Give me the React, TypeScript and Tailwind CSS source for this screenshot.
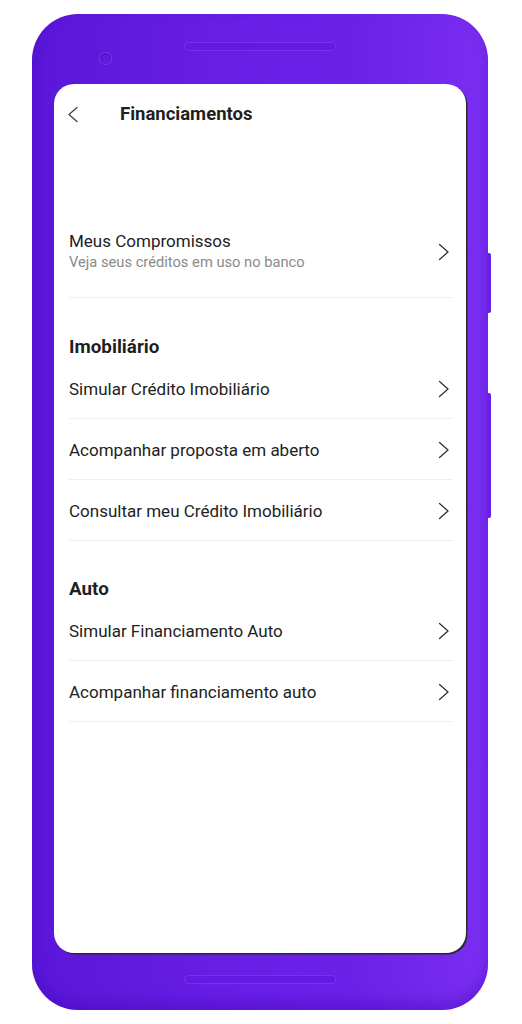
import React from "react";

const Chevron = () => (
  <svg width="12" height="18" viewBox="0 0 12 18" fill="none" className="shrink-0">
    <polyline points="1.5,1.5 10,9 1.5,16.5" stroke="#333" strokeWidth="1.3" strokeLinecap="round" strokeLinejoin="round" />
  </svg>
);

const Row = ({ label }: { label: string }) => (
  <div className="h-[61px] flex items-center justify-between border-b border-[#efefef] pr-[3px] pt-[2px]">
    <span className="text-[17px] text-[#222] leading-[20px]">{label}</span>
    <Chevron />
  </div>
);

export default function App() {
  return (
    <div className="w-[522px] h-[1024px] bg-white overflow-hidden" style={{ fontFamily: "Roboto, 'Noto Sans', sans-serif" }}>
      <div className="relative ml-[32px] mt-[14px] w-[456px] h-[996px] rounded-[46px] bg-[linear-gradient(90deg,#5a16d9_0%,#671ee5_40%,#6c21e9_70%,#7a2ef2_100%)] shadow-[inset_0_-8px_14px_rgba(60,0,170,0.35)] pt-[70px] pl-[22px]">
        {/* speaker */}
        <div className="absolute left-[153px] top-[29px] w-[150px] h-[7px] rounded-full bg-[#631ae2] shadow-[0_0_0_1px_rgba(130,70,240,0.5)]" />
        {/* camera */}
        <div className="absolute left-[68px] top-[39px] w-[11px] h-[11px] rounded-full bg-[#621adf] shadow-[0_0_0_1px_rgba(140,80,245,0.6),inset_0_1px_2px_rgba(40,0,120,0.5)]" />
        {/* side buttons */}
        <div className="absolute left-[455px] top-[239px] w-[4px] h-[60px] rounded-r-[2px] bg-[#6a1fe8]" />
        <div className="absolute left-[455px] top-[379px] w-[4px] h-[125px] rounded-r-[2px] bg-[#6a1fe8]" />

        {/* screen */}
        <div className="w-[412px] h-[869px] bg-white rounded-[20px] shadow-[1.5px_1.5px_0_#2a2a2a] overflow-hidden flex flex-col">
          <div className="h-[60px] flex items-center pl-[13px]">
            <svg width="12" height="17" viewBox="0 0 12 17" fill="none" className="shrink-0">
              <polyline points="10,1.5 2,8.5 10,15.5" stroke="#444" strokeWidth="1.3" strokeLinecap="round" strokeLinejoin="round" />
            </svg>
            <span className="ml-[41px] text-[18.5px] font-bold text-[#1f1f1f] leading-[22px]">Financiamentos</span>
          </div>

          <div className="pl-[15px] pr-[13px] flex flex-col">
            <div className="mt-[87px] flex items-center justify-between pb-[25px] border-b border-[#efefef] pr-[3px]">
              <div className="flex flex-col gap-[1px]">
                <span className="text-[17px] text-[#222] leading-[20px]">Meus Compromissos</span>
                <span className="text-[14.7px] text-[#8a8a8a] leading-[20px]">Veja seus créditos em uso no banco</span>
              </div>
              <Chevron />
            </div>

            <div className="mt-[38px] text-[18.8px] font-bold text-[#1f1f1f] leading-[22px]">Imobiliário</div>
            <Row label="Simular Crédito Imobiliário" />
            <Row label="Acompanhar proposta em aberto" />
            <Row label="Consultar meu Crédito Imobiliário" />

            <div className="mt-[37px] text-[18.8px] font-bold text-[#1f1f1f] leading-[22px]">Auto</div>
            <Row label="Simular Financiamento Auto" />
            <Row label="Acompanhar financiamento auto" />
          </div>
        </div>

        {/* bottom bar */}
        <div className="mt-[23px] ml-[131px] w-[150px] h-[7px] rounded-full bg-[#631ae2] shadow-[0_0_0_1px_rgba(130,70,240,0.5)]" />
      </div>
    </div>
  );
}
